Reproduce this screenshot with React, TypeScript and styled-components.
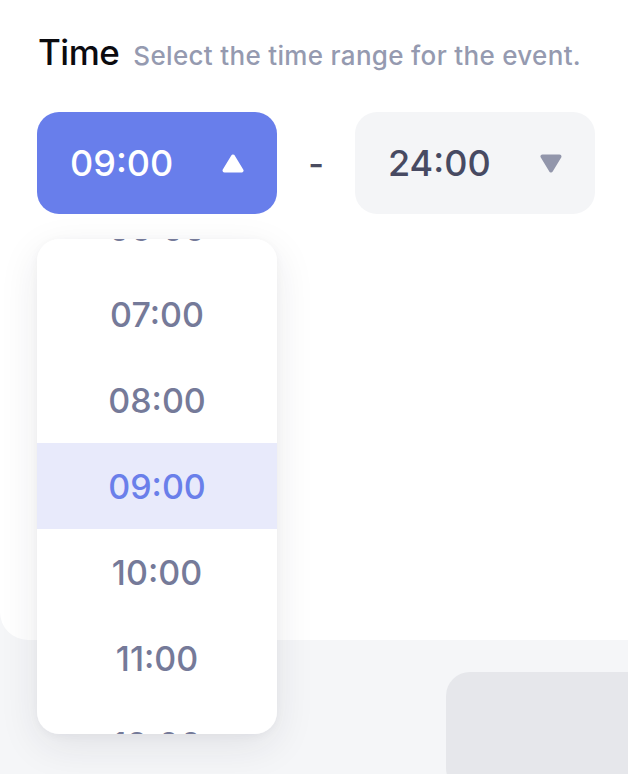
import React, { useLayoutEffect, useRef } from "react";
import styled, { createGlobalStyle } from "styled-components";

const GlobalStyle = createGlobalStyle`
  html, body {
    margin: 0;
    padding: 0;
    background: #f5f6f8;
    overflow: hidden;
  }
  body {
    font-family: Inter, "Noto Sans", "Liberation Sans", sans-serif;
  }
  * { box-sizing: border-box; }
`;

const Page = styled.div`
  width: 628px;
  height: 774px;
  background: #f5f6f8;
  display: flex;
  flex-direction: column;
  overflow: hidden;
`;

const Card = styled.section`
  flex-shrink: 0;
  height: 640px;
  background: #ffffff;
  border-radius: 0 0 0 28px;
  padding: 29px 0 0 37px;
  display: flex;
  flex-direction: column;
  gap: 37px;
  position: relative;
  z-index: 1;
`;

const Header = styled.div`
  display: flex;
  align-items: baseline;
  gap: 14px;
  padding-left: 1px;
`;

const Title = styled.h2`
  margin: 0;
  font-size: 35px;
  line-height: 46px;
  font-weight: 500;
  color: #0b0b0f;
  letter-spacing: -0.5px;
`;

const Subtitle = styled.span`
  font-size: 26px;
  font-weight: 500;
  letter-spacing: 0.32px;
  color: #959ab0;
  white-space: nowrap;
`;

const RangeRow = styled.div`
  display: flex;
  align-items: center;
`;

const SelectWrap = styled.div`
  position: relative;
  flex-shrink: 0;
`;

const SelectButton = styled.button<{ $open?: boolean }>`
  width: 240px;
  height: 102px;
  border: none;
  border-radius: 22px;
  padding: 0 33px;
  display: flex;
  align-items: center;
  justify-content: space-between;
  font-family: inherit;
  font-size: 36px;
  font-weight: 500;
  background: ${(p) => (p.$open ? "#687eeb" : "#f4f5f7")};
  color: ${(p) => (p.$open ? "#ffffff" : "#474a62")};
  cursor: pointer;
`;

const Dash = styled.span`
  flex-shrink: 0;
  width: 78px;
  text-align: center;
  font-size: 34px;
  font-weight: 500;
  color: #4a4c60;
`;

const Dropdown = styled.div`
  position: absolute;
  top: calc(100% + 25px);
  left: 0;
  width: 240px;
  height: 495px;
  background: #ffffff;
  border-radius: 22px;
  box-shadow: 0 12px 40px rgba(30, 35, 60, 0.09), 0 2px 10px rgba(30, 35, 60, 0.04);
  overflow-y: auto;
  scrollbar-width: none;
  &::-webkit-scrollbar { display: none; }
  z-index: 5;
`;

const Option = styled.div<{ $active?: boolean }>`
  height: 86px;
  display: flex;
  align-items: center;
  justify-content: center;
  font-size: 34px;
  font-weight: 500;
  color: ${(p) => (p.$active ? "#6a7fea" : "#757a99")};
  background: ${(p) => (p.$active ? "#e8eafb" : "transparent")};
`;

const Footer = styled.div`
  flex: 1;
  min-height: 0;
  display: flex;
  padding: 32px 0 0 446px;
  overflow: hidden;
`;

const FooterButton = styled.div`
  flex: 1;
  height: 120px;
  flex-shrink: 0;
  background: #e6e7eb;
  border-radius: 24px 0 0 24px;
`;

const Caret = ({ up, color }: { up?: boolean; color: string }) => (
  <svg width="22" height="19" viewBox="0 0 22 19" aria-hidden>
    <polygon
      points={up ? "11,2.5 19.5,16.5 2.5,16.5" : "2.5,2.5 19.5,2.5 11,16.5"}
      fill={color}
      stroke={color}
      strokeWidth="4"
      strokeLinejoin="round"
    />
  </svg>
);

const hours = Array.from({ length: 25 }, (_, i) => `${String(i).padStart(2, "0")}:00`);

export default function App() {
  const listRef = useRef<HTMLDivElement>(null);
  useLayoutEffect(() => {
    if (listRef.current) listRef.current.scrollTop = 6 * 86 + 54;
  }, []);

  return (
    <Page>
      <GlobalStyle />
      <Card>
        <Header>
          <Title>Time</Title>
          <Subtitle>Select the time range for the event.</Subtitle>
        </Header>
        <RangeRow>
          <SelectWrap>
            <SelectButton $open>
              <span>09:00</span>
              <Caret up color="#ffffff" />
            </SelectButton>
            <Dropdown ref={listRef}>
              {hours.map((h) => (
                <Option key={h} $active={h === "09:00"}>
                  {h}
                </Option>
              ))}
            </Dropdown>
          </SelectWrap>
          <Dash>-</Dash>
          <SelectWrap>
            <SelectButton>
              <span>24:00</span>
              <Caret color="#9296ab" />
            </SelectButton>
          </SelectWrap>
        </RangeRow>
      </Card>
      <Footer>
        <FooterButton />
      </Footer>
    </Page>
  );
}
